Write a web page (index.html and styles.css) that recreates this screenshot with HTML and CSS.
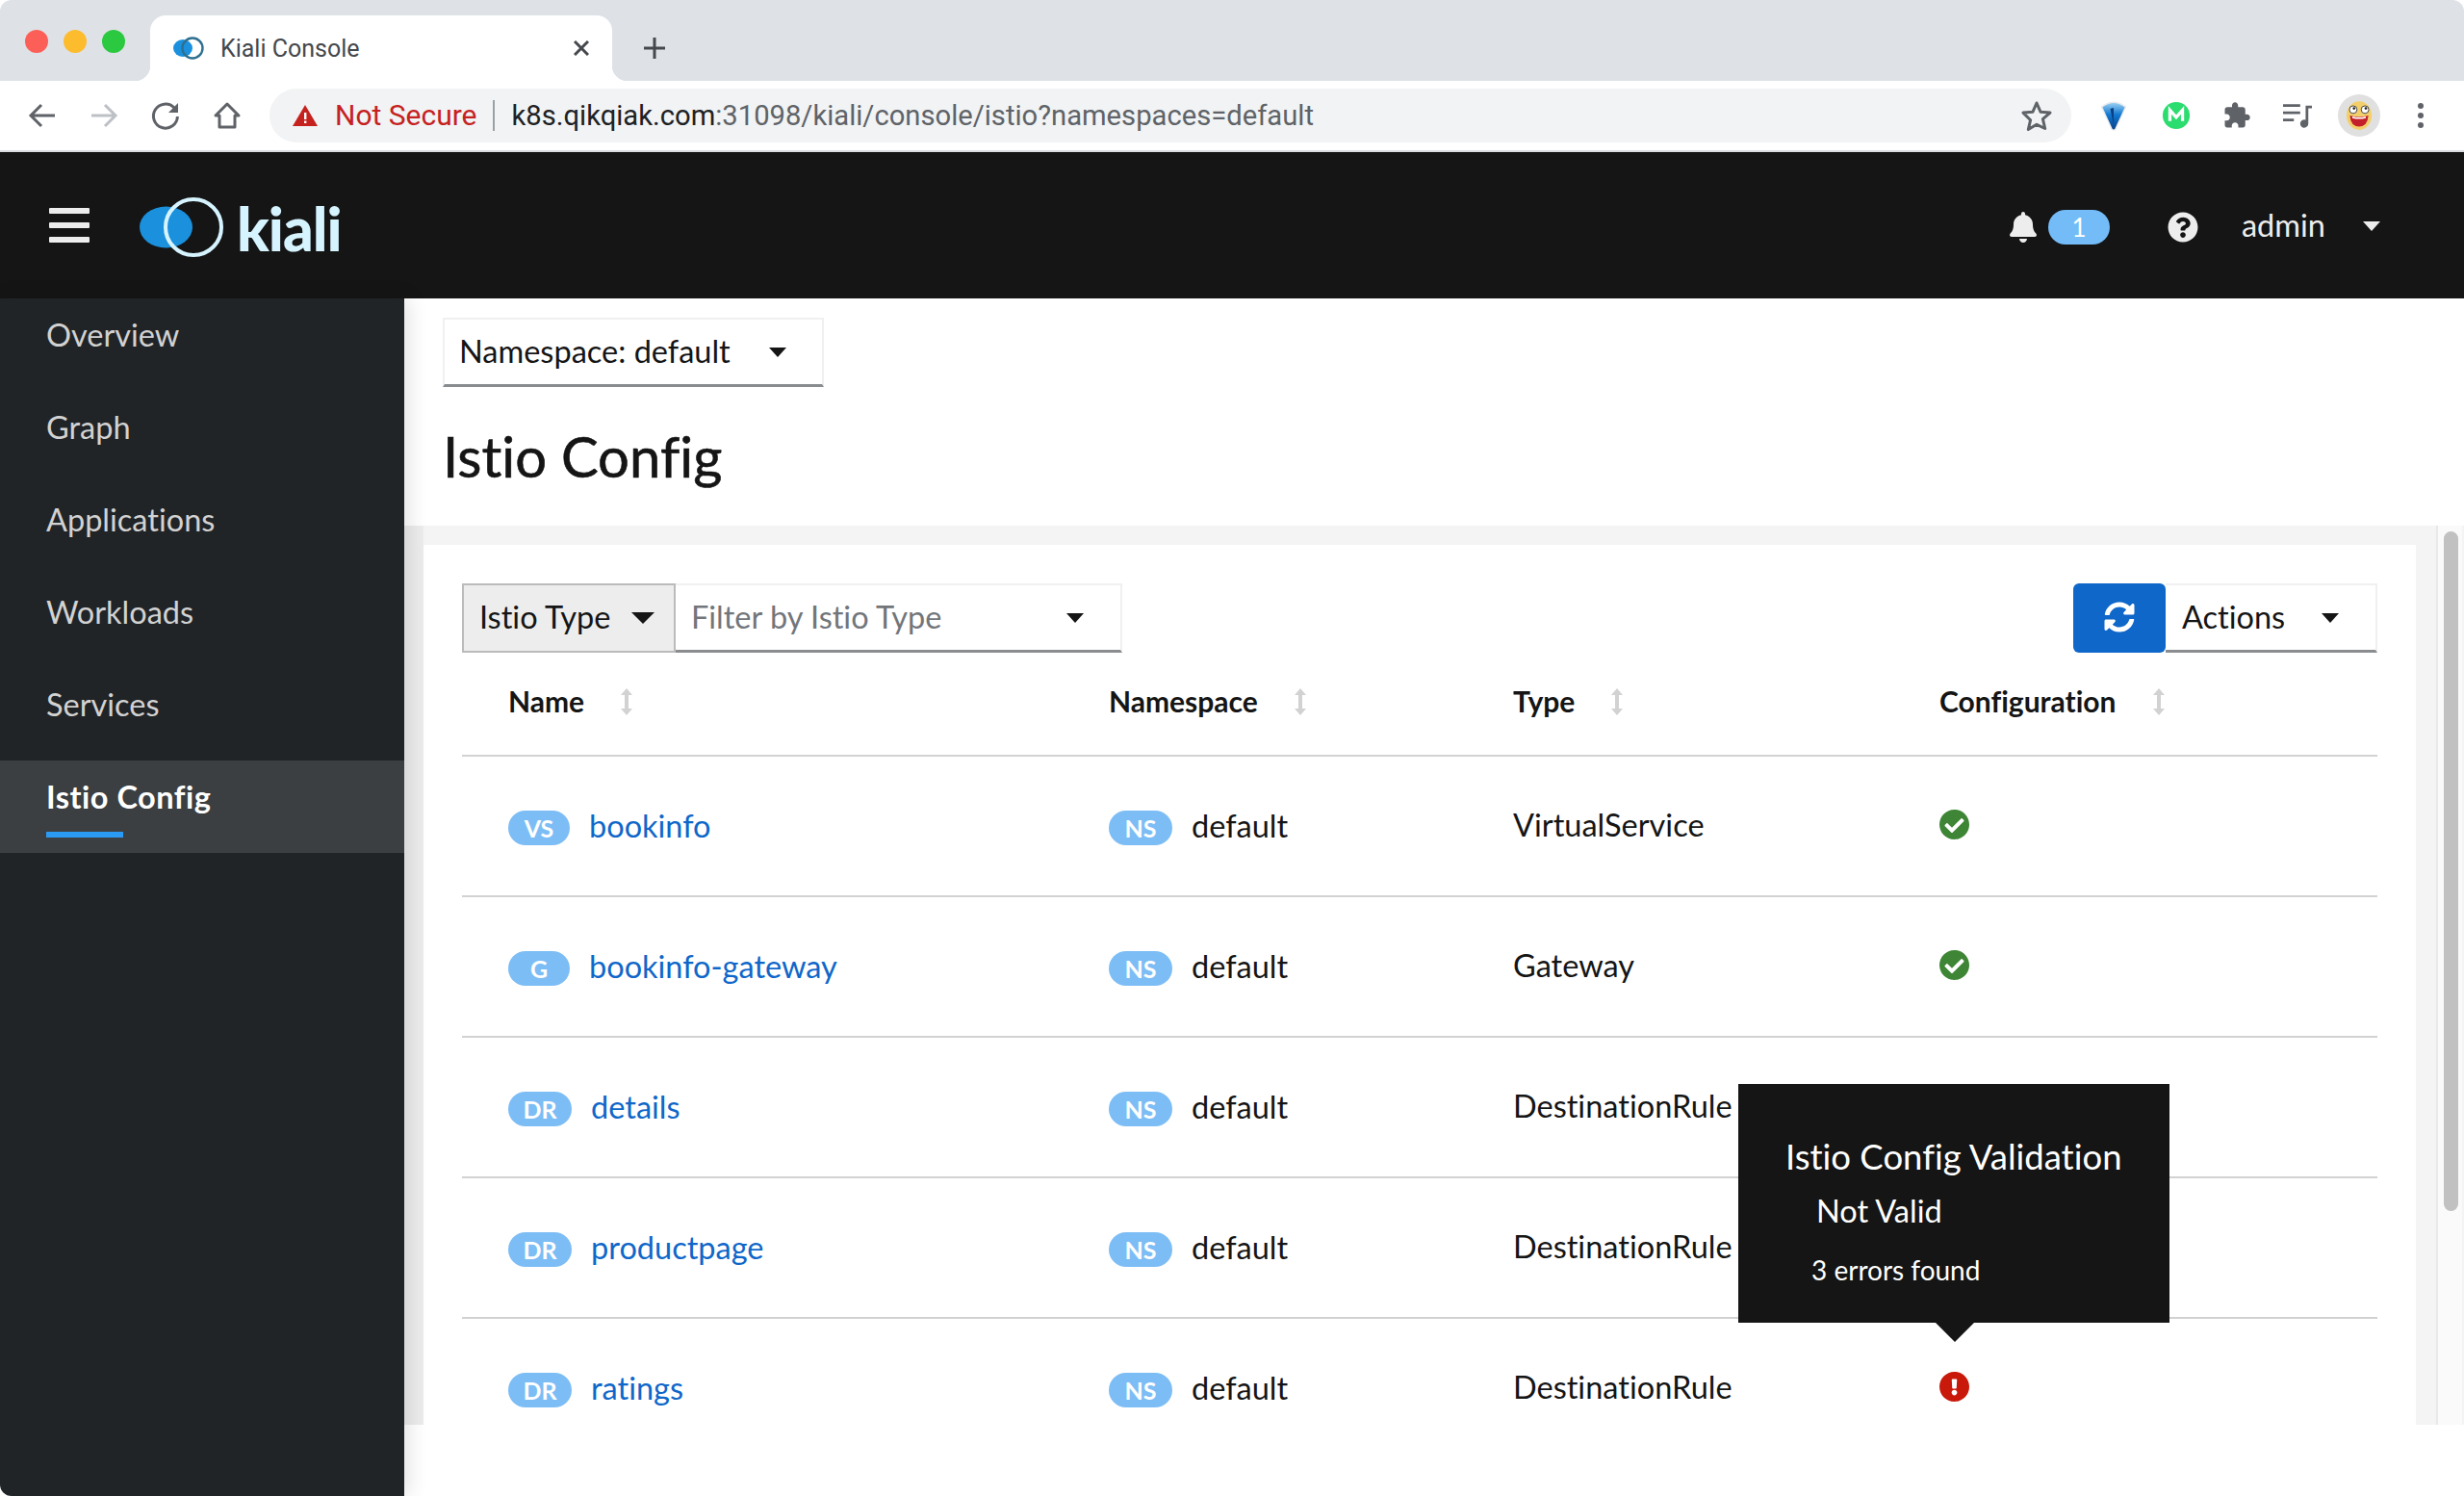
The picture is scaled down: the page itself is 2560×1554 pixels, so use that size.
FILE: index.html
```html
<!DOCTYPE html>
<html lang="en">
<head>
    <meta charset="UTF-8">
    <title>Kiali Console</title>
    <link rel="stylesheet" href="styles.css">
</head>
<body>
<div class="window">
    <div class="tabstrip">
        <div class="lights">
            <span class="light red"></span>
            <span class="light yellow"></span>
            <span class="light green"></span>
        </div>
        <div class="tab">
            <svg class="favicon" viewBox="0 0 32 24">
                <ellipse cx="10" cy="12" rx="10" ry="9" fill="#1b90dd"/>
                <circle cx="20" cy="12" r="10.5" fill="#fff" fill-opacity="0" stroke="#2f6f8f" stroke-width="2.4"/>
            </svg>
            <span class="tab-title">Kiali Console</span>
            <svg class="tab-close" viewBox="0 0 16 16"><path d="M1 1l14 14M15 1L1 15" stroke="#45484c" stroke-width="3" fill="none"/></svg>
        </div>
        <svg class="new-tab" viewBox="0 0 24 24"><path d="M12 1v22M1 12h22" stroke="#45484c" stroke-width="3" fill="none"/></svg>
    </div>

    <div class="toolbar">
        <svg class="nav-icon" viewBox="0 0 32 32"><path d="M29 16H5M15 5L4 16l11 11" stroke="#5f6368" stroke-width="3" fill="none"/></svg>
        <svg class="nav-icon" viewBox="0 0 32 32"><path d="M3 16h24M17 5l11 11-11 11" stroke="#bdc1c6" stroke-width="3" fill="none"/></svg>
        <svg class="nav-icon" viewBox="0 0 32 32"><path d="M25 8a12.5 12.5 0 1 0 3.4 9" stroke="#5f6368" stroke-width="3" fill="none"/><path d="M29 3v10H19z" fill="#5f6368"/></svg>
        <svg class="nav-icon" viewBox="0 0 32 32"><path d="M16 4L4 16h4v12h16V16h4z" stroke="#5f6368" stroke-width="3" fill="none" stroke-linejoin="round"/></svg>
        <div class="omnibox">
            <svg class="warn" viewBox="0 0 26 22"><path d="M13 0l13 22H0z" fill="#c5221f"/><path d="M12 8h2.4v7H12zM12 16.500h2.400v2.500H12z" fill="#fff"/></svg>
            <span class="not-secure">Not Secure</span>
            <span class="url"><span class="host">k8s.qikqiak.com</span>:31098/kiali/console/istio?namespaces=default</span>
            <svg class="star" viewBox="0 0 32 32"><path d="M16 3l4 9.200 10 .9-7.600 6.600 2.300 9.800L16 25.300l-8.700 5.200 2.300-9.800L2 13.100l10-.9z" stroke="#5f6368" stroke-width="3" fill="none" stroke-linejoin="round"/></svg>
        </div>
        <div class="extensions">
            <svg class="ext ext-first" viewBox="0 0 32 36">
                <defs><linearGradient id="gem" x1="0" y1="0" x2="0" y2="1"><stop offset="0" stop-color="#9fd4f5"/><stop offset=".45" stop-color="#1278d0"/><stop offset="1" stop-color="#0a3f86"/></linearGradient></defs>
                <path d="M2 8q14-11 28 0L18 34q-2 2-4 0z" fill="url(#gem)" stroke="#e8eaed" stroke-width="1.500"/>
                <path d="M16 9l-4 1 3 14 1 4z" fill="#0a3f86"/>
            </svg>
            <svg class="ext" viewBox="0 0 32 32">
                <circle cx="16" cy="16" r="15" fill="#2bdc6f"/>
                <path d="M9 22V10l7 8 7-8v12" stroke="#fff" stroke-width="3.500" fill="none"/>
            </svg>
            <svg class="ext" viewBox="0 0 24 24"><path fill="#5f6368" d="M20.500 11H19V7c0-1.100-.9-2-2-2h-4V3.500C13 2.120 11.880 1 10.500 1S8 2.120 8 3.500V5H4c-1.100 0-1.990.9-1.990 2v3.800H3.500c1.490 0 2.700 1.210 2.700 2.700s-1.210 2.700-2.700 2.700H2V20c0 1.100.9 2 2 2h3.800v-1.500c0-1.490 1.210-2.700 2.700-2.700 1.490 0 2.700 1.210 2.700 2.700V22H17c1.100 0 2-.9 2-2v-4h1.500c1.380 0 2.500-1.120 2.500-2.500S21.880 11 20.500 11z"/></svg>
            <svg class="ext" viewBox="0 0 32 32">
                <path d="M0 5h19M0 13h19M0 21h12" stroke="#5f6368" stroke-width="3" fill="none"/>
                <path d="M25 5h7v3h-4v17a4.500 4.500 0 1 1-3-4.200z" fill="#5f6368"/>
            </svg>
            <div class="avatar">
                <svg viewBox="0 0 32 36">
                    <ellipse cx="16" cy="18" rx="15" ry="17" fill="#f3cf6c"/>
                    <circle cx="9" cy="11" r="4.500" fill="#fff" stroke="#333" stroke-width="1"/>
                    <circle cx="23" cy="11" r="4.500" fill="#fff" stroke="#333" stroke-width="1"/>
                    <circle cx="10" cy="9.500" r="1.500" fill="#222"/>
                    <circle cx="24" cy="9.500" r="1.500" fill="#222"/>
                    <path d="M5 18q11 3 22 0q-1 13-11 13T5 18z" fill="#c3202b"/>
                    <path d="M8 19q8 2 16 0v2q-8 2-16 0z" fill="#fff"/>
                </svg>
            </div>
            <div class="kebab"><span></span><span></span><span></span></div>
        </div>
    </div>

    <header class="masthead">
        <div class="hamburger"><span></span><span></span><span></span></div>
        <svg class="logo-mark" viewBox="0 0 88 62">
            <ellipse cx="27.500" cy="31" rx="27.500" ry="21.500" fill="#1b90dd"/>
            <circle cx="56" cy="31" r="29" fill="none" stroke="#d6f4ff" stroke-width="4"/>
        </svg>
        <span class="logo-text">kiali</span>
        <div class="masthead-right">
            <svg class="bell" viewBox="0 0 448 512"><path fill="#ededed" d="M224 512c35.320 0 63.970-28.650 63.970-64H160.030c0 35.350 28.650 64 63.970 64zm215.390-149.710c-19.320-20.760-55.470-51.990-55.470-154.290 0-77.700-54.480-139.900-127.940-155.160V32c0-17.670-14.320-32-31.980-32s-31.980 14.330-31.980 32v20.840C118.560 68.100 64.080 130.300 64.080 208c0 102.300-36.150 133.530-55.470 154.290-6 6.450-8.660 14.160-8.610 21.710.11 16.400 12.980 32 32.100 32h383.800c19.120 0 32-15.600 32.100-32 .05-7.550-2.610-15.270-8.610-21.710z"/></svg>
            <span class="count">1</span>
            <svg class="help" viewBox="0 0 512 512"><path fill="#ededed" d="M504 256c0 136.997-111.043 248-248 248S8 392.997 8 256C8 119.083 119.043 8 256 8s248 111.083 248 248zM262.655 90c-54.497 0-89.255 22.957-116.549 63.758-3.536 5.286-2.353 12.415 2.715 16.258l34.699 26.310c5.205 3.947 12.621 3.008 16.665-2.122 17.864-22.658 30.113-35.797 57.303-35.797 20.429 0 45.698 13.148 45.698 32.958 0 14.976-12.363 22.667-32.534 33.976C247.128 238.528 216 254.941 216 296v4c0 6.627 5.373 12 12 12h56c6.627 0 12-5.373 12-12v-1.333c0-28.462 83.186-29.647 83.186-106.667 0-58.002-60.165-102-116.531-102zM256 338c-25.365 0-46 20.635-46 46 0 25.364 20.635 46 46 46s46-20.636 46-46c0-25.365-20.635-46-46-46z"/></svg>
            <span class="user">admin</span>
            <span class="caret caret-light"></span>
        </div>
    </header>

    <div class="app">
        <nav class="sidebar">
            <a class="nav-item">Overview</a>
            <a class="nav-item">Graph</a>
            <a class="nav-item">Applications</a>
            <a class="nav-item">Workloads</a>
            <a class="nav-item">Services</a>
            <a class="nav-item active">Istio Config</a>
        </nav>

        <main class="main">
            <div class="namespace-bar">
                <div class="select namespace-select">
                    <span>Namespace: default</span>
                    <span class="caret"></span>
                </div>
            </div>
            <h1 class="page-title">Istio Config</h1>

            <div class="scroll-area">
                <div class="card">
                    <div class="filters">
                        <div class="type-select">
                            <span>Istio Type</span>
                            <span class="caret caret-big"></span>
                        </div>
                        <div class="select filter-input">
                            <span class="placeholder">Filter by Istio Type</span>
                            <span class="caret"></span>
                        </div>
                        <div class="filters-right">
                            <button class="refresh">
                                <svg viewBox="0 0 512 512"><path fill="#fff" d="M370.720 133.280C339.458 104.008 298.888 87.962 255.848 88c-77.458.068-144.328 53.178-162.791 126.850-1.344 5.363-6.122 9.150-11.651 9.150H24.103c-7.498 0-13.194-6.807-11.807-14.176C33.933 94.924 134.813 8 256 8c66.448 0 126.791 26.136 171.315 68.685L463.030 40.970C478.149 25.851 504 36.559 504 57.941V192c0 13.255-10.745 24-24 24H345.941c-21.382 0-32.090-25.851-16.971-40.971l41.750-41.749zM32 296h134.059c21.382 0 32.090 25.851 16.971 40.971l-41.750 41.750c31.262 29.273 71.835 45.319 114.876 45.280 77.418-.07 144.315-53.144 162.787-126.849 1.344-5.363 6.122-9.150 11.651-9.150h57.304c7.498 0 13.194 6.807 11.807 14.176C478.067 417.076 377.187 504 256 504c-66.448 0-126.791-26.136-171.315-68.685L48.970 471.030C33.851 486.149 8 475.441 8 454.059V320c0-13.255 10.745-24 24-24z"/></svg>
                            </button>
                            <div class="select actions">
                                <span>Actions</span>
                                <span class="caret"></span>
                            </div>
                        </div>
                    </div>

                    <div class="row head">
                        <div class="cell">Name <svg class="sort" viewBox="0 0 12 28"><path d="M6 0l6 7H8v14h4l-6 7-6-7h4V7H0z" fill="#d2d2d2"/></svg></div>
                        <div class="cell">Namespace <svg class="sort" viewBox="0 0 12 28"><path d="M6 0l6 7H8v14h4l-6 7-6-7h4V7H0z" fill="#d2d2d2"/></svg></div>
                        <div class="cell">Type <svg class="sort" viewBox="0 0 12 28"><path d="M6 0l6 7H8v14h4l-6 7-6-7h4V7H0z" fill="#d2d2d2"/></svg></div>
                        <div class="cell">Configuration <svg class="sort" viewBox="0 0 12 28"><path d="M6 0l6 7H8v14h4l-6 7-6-7h4V7H0z" fill="#d2d2d2"/></svg></div>
                    </div>

                    <div class="row">
                        <div class="cell"><span class="badge">VS</span><a class="link">bookinfo</a></div>
                        <div class="cell"><span class="badge ns">NS</span><span>default</span></div>
                        <div class="cell">VirtualService</div>
                        <div class="cell"><svg class="status" viewBox="8 8 496 496"><path fill="#3e8635" d="M504 256c0 136.967-111.033 248-248 248S8 392.967 8 256 119.033 8 256 8s248 111.033 248 248zM227.314 387.314l184-184c6.248-6.248 6.248-16.379 0-22.627l-22.627-22.627c-6.248-6.249-16.379-6.249-22.628 0L216 308.118l-70.059-70.059c-6.248-6.248-16.379-6.248-22.628 0l-22.627 22.627c-6.248 6.248-6.248 16.379 0 22.627l104 104c6.249 6.249 16.379 6.249 22.628.001z"/></svg></div>
                    </div>
                    <div class="row">
                        <div class="cell"><span class="badge">G</span><a class="link">bookinfo-gateway</a></div>
                        <div class="cell"><span class="badge ns">NS</span><span>default</span></div>
                        <div class="cell">Gateway</div>
                        <div class="cell"><svg class="status" viewBox="8 8 496 496"><path fill="#3e8635" d="M504 256c0 136.967-111.033 248-248 248S8 392.967 8 256 119.033 8 256 8s248 111.033 248 248zM227.314 387.314l184-184c6.248-6.248 6.248-16.379 0-22.627l-22.627-22.627c-6.248-6.249-16.379-6.249-22.628 0L216 308.118l-70.059-70.059c-6.248-6.248-16.379-6.248-22.628 0l-22.627 22.627c-6.248 6.248-6.248 16.379 0 22.627l104 104c6.249 6.249 16.379 6.249 22.628.001z"/></svg></div>
                    </div>
                    <div class="row">
                        <div class="cell"><span class="badge dr">DR</span><a class="link">details</a></div>
                        <div class="cell"><span class="badge ns">NS</span><span>default</span></div>
                        <div class="cell">DestinationRule</div>
                        <div class="cell"></div>
                    </div>
                    <div class="row">
                        <div class="cell"><span class="badge dr">DR</span><a class="link">productpage</a></div>
                        <div class="cell"><span class="badge ns">NS</span><span>default</span></div>
                        <div class="cell">DestinationRule</div>
                        <div class="cell"></div>
                    </div>
                    <div class="row">
                        <div class="cell"><span class="badge dr">DR</span><a class="link">ratings</a></div>
                        <div class="cell"><span class="badge ns">NS</span><span>default</span></div>
                        <div class="cell">DestinationRule</div>
                        <div class="cell status-cell">
                            <svg class="status" viewBox="8 8 496 496"><path fill="#c9190b" d="M504 256c0 136.997-111.043 248-248 248S8 392.997 8 256C8 119.083 119.043 8 256 8s248 111.083 248 248zm-248 50c-25.405 0-46 20.595-46 46s20.595 46 46 46 46-20.595 46-46-20.595-46-46-46zm-43.673-165.346l7.418 136c.347 6.364 5.609 11.346 11.982 11.346h48.546c6.373 0 11.635-4.982 11.982-11.346l7.418-136c.375-6.874-5.098-12.654-11.982-12.654h-63.383c-6.884 0-12.356 5.780-11.981 12.654z"/></svg>
                            <div class="tooltip">
                                <div class="tooltip-title">Istio Config Validation</div>
                                <div class="tooltip-state">Not Valid</div>
                                <div class="tooltip-note">3 errors found</div>
                            </div>
                        </div>
                    </div>
                </div>
                <div class="scrollbar"><div class="thumb"></div></div>
            </div>
        </main>
    </div>
</div>
</body>
</html>
```

FILE: styles.css
```css
* {
    margin: 0;
    padding: 0;
    box-sizing: border-box;
}

body {
    background-color: #ffffff;
    font-family: 'Lato', 'Noto Sans', sans-serif;
    font-size: 32.5px;
    font-variant-ligatures: none;
    color: #151515;
}

.window {
    width: 2560px;
    height: 1554px;
    display: flex;
    flex-direction: column;
    overflow: hidden;
    border-radius: 12px;
}

/* browser chrome */
.tabstrip {
    height: 84px;
    flex: none;
    background-color: #dee1e6;
    display: flex;
    align-items: flex-end;
    padding-left: 26px;
}

.lights {
    display: flex;
    gap: 16px;
    align-self: flex-start;
    margin-top: 31px;
    width: 130px;
}

.light {
    width: 24px;
    height: 24px;
    border-radius: 50%;
}

.red { background-color: #fc5f57; }
.yellow { background-color: #fdbc2e; }
.green { background-color: #2ac940; }

.tab {
    position: relative;
    width: 480px;
    height: 68px;
    background-color: #ffffff;
    border-radius: 16px 16px 0 0;
    display: flex;
    align-items: center;
    padding-left: 24px;
}

.tab::before,
.tab::after {
    content: "";
    position: absolute;
    bottom: 0;
    width: 16px;
    height: 16px;
}

.tab::before {
    left: -16px;
    background: radial-gradient(circle at 0 0, #dee1e6 16px, #ffffff 16.5px);
}

.tab::after {
    right: -16px;
    background: radial-gradient(circle at 100% 0, #dee1e6 16px, #ffffff 16.5px);
}

.favicon {
    width: 32px;
    height: 24px;
    margin-right: 17px;
}

.tab-title {
    font-family: 'Roboto', sans-serif;
    font-size: 25px;
    color: #45484c;
    flex: 1;
}

.tab-close {
    width: 16px;
    height: 16px;
    margin-right: 24px;
}

.new-tab {
    width: 24px;
    height: 24px;
    margin: 0 0 22px 32px;
}

.toolbar {
    height: 74px;
    flex: none;
    background-color: #ffffff;
    border-bottom: 2px solid #dadce0;
    display: flex;
    align-items: center;
    padding-left: 28px;
}

.nav-icon {
    width: 32px;
    height: 32px;
    margin-right: 32px;
}

.omnibox {
    width: 1872px;
    height: 56px;
    margin-left: -4px;
    background-color: #f1f3f4;
    border-radius: 28px;
    display: flex;
    align-items: center;
    padding-left: 24px;
    font-family: 'Roboto', sans-serif;
    font-size: 29.2px;
}

.warn {
    width: 26px;
    height: 22px;
    margin-right: 18px;
}

.not-secure {
    color: #c5221f;
    font-size: 30px;
    padding-right: 16px;
    border-right: 2px solid #9aa0a6;
    margin-right: 18px;
    line-height: 32px;
}

.url {
    color: #5f6368;
    flex: 1;
}

.host {
    color: #202124;
}

.star {
    width: 32px;
    height: 32px;
    margin-right: 20px;
}

.extensions {
    display: flex;
    align-items: center;
}

.ext {
    width: 30px;
    height: 32px;
    margin-left: 33px;
}

.ext-first {
    margin: 0 2px 0 29px;
}

.avatar {
    width: 44px;
    height: 44px;
    margin-left: 27px;
    background-color: #e0e0e0;
    border-radius: 50%;
    display: flex;
    align-items: center;
    justify-content: center;
}

.avatar svg {
    width: 28px;
    height: 32px;
}

.kebab {
    display: flex;
    flex-direction: column;
    gap: 4px;
    margin-left: 39px;
}

.kebab span {
    width: 6px;
    height: 6px;
    border-radius: 50%;
    background-color: #5f6368;
}

/* kiali masthead */
.masthead {
    height: 152px;
    flex: none;
    background-color: #151515;
    display: flex;
    align-items: center;
    padding-left: 51px;
}

.hamburger {
    display: flex;
    flex-direction: column;
    gap: 9px;
    margin: 0 52px 0 0;
}

.hamburger span {
    width: 42px;
    height: 6px;
    background-color: #ededed;
    border-radius: 1px;
}

.logo-mark {
    width: 88px;
    height: 62px;
    margin-top: 3px;
}

.logo-text {
    font-weight: 900;
    font-size: 62px;
    letter-spacing: -1px;
    color: #d6f4ff;
    margin: 6px 0 0 13px;
}

.masthead-right {
    margin-left: auto;
    display: flex;
    align-items: center;
    margin-top: 4px;
    padding-right: 86px;
}

.bell {
    width: 28px;
    height: 32px;
    margin-right: 12px;
}

.count {
    width: 64px;
    height: 36px;
    border-radius: 18px;
    background-color: #73bcf7;
    color: #ffffff;
    font-size: 26px;
    text-align: center;
    line-height: 36px;
}

.help {
    width: 32px;
    height: 32px;
    margin: 0 45px 0 60px;
}

.user {
    color: #ededed;
    margin: -6px 39px 0 0;
}

.caret {
    display: inline-block;
    width: 0;
    height: 0;
    margin-top: 3px;
    border-top: 10px solid #151515;
    border-left: 9px solid transparent;
    border-right: 9px solid transparent;
}

.caret-light {
    border-top-color: #ededed;
    margin: -2px 1px 0 0;
}

.caret-big {
    border-top-width: 12px;
    border-left-width: 12px;
    border-right-width: 12px;
}

/* page */
.app {
    flex: 1;
    display: flex;
    min-height: 0;
}

.sidebar {
    width: 420px;
    flex: none;
    background-color: #212427;
    box-shadow: 4px 0 20px rgba(0, 0, 0, 0.12);
    position: relative;
    z-index: 1;
}

.nav-item {
    display: block;
    height: 96px;
    padding: 14px 48px 0;
    line-height: 48px;
    color: #d2d2d2;
}

.nav-item.active {
    background-color: #3c3f42;
    color: #ffffff;
    font-weight: 700;
    letter-spacing: 0.5px;
}

.nav-item.active::after {
    content: "";
    display: block;
    width: 80px;
    height: 6px;
    margin-top: 12px;
    background-color: #2b9af3;
}

.main {
    flex: 1;
    min-width: 0;
    display: flex;
    flex-direction: column;
}

.namespace-bar {
    padding: 20px 40px 0;
}

.select {
    height: 72px;
    display: flex;
    align-items: center;
    justify-content: space-between;
    background-color: #ffffff;
    border: 2px solid #f0f0f0;
    border-bottom: 3px solid #8a8d90;
    padding-bottom: 3px;
}

.namespace-select {
    width: 396px;
    padding-left: 15px;
    padding-right: 37px;
}

.page-title {
    height: 144px;
    padding-left: 40px;
    font-size: 58px;
    font-weight: 400;
    line-height: 144px;
    -webkit-text-stroke: 0.6px #151515;
}

.scroll-area {
    height: 934px;
    display: flex;
    background-color: #f4f4f4;
    box-shadow: inset 20px 0 0 #ececec;
}

.card {
    position: relative;
    width: 2070px;
    height: 914px;
    margin: 20px 21px 0 20px;
    padding: 40px 40px 0;
    background-color: #ffffff;
    overflow: hidden;
}

.filters {
    display: flex;
    height: 72px;
}

.type-select {
    width: 222px;
    display: flex;
    align-items: center;
    justify-content: space-between;
    padding: 0 20px 3px 16px;
    background-color: #ededed;
    border: 2px solid #bbbbbb;
}

.filter-input {
    width: 464px;
    padding-left: 16px;
    padding-right: 38px;
    border-left: none;
}

.placeholder {
    color: #72767b;
}

.filters-right {
    margin-left: auto;
    display: flex;
}

.refresh {
    width: 96px;
    height: 72px;
    padding-bottom: 2px;
    background-color: #0f67c9;
    border: none;
    border-radius: 6px;
    display: flex;
    align-items: center;
    justify-content: center;
}

.refresh svg {
    width: 32px;
    height: 32px;
}

.actions {
    width: 220px;
    padding-left: 17px;
    padding-right: 38px;
    border-left: none;
}

.row {
    display: grid;
    grid-template-columns: 624px 420px 443px 455px;
    height: 146px;
    padding: 0 0 4px 48px;
    border-bottom: 2px solid #d2d2d2;
    align-items: center;
}

.row.head {
    height: 108px;
    padding-bottom: 7px;
    font-size: 30px;
    font-weight: 700;
}

.cell {
    display: flex;
    align-items: center;
}

.sort {
    width: 12px;
    height: 28px;
    margin: 2px 0 0 38px;
}

.badge {
    width: 64px;
    height: 36px;
    margin: 8px 20px 0 0;
    border-radius: 18px;
    background-color: #7dbdf5;
    color: #ffffff;
    font-size: 25px;
    font-weight: 700;
    line-height: 36px;
    text-align: center;
}

.badge.dr {
    width: 66px;
    margin-right: 20px;
}

.badge.ns {
    width: 66px;
}

.link {
    color: #0f67c9;
}

.row .cell > span:not(.badge),
.row .link {
    margin-top: 2px;
}

.status {
    width: 31px;
    height: 31px;
    margin-top: 0;
}

.status-cell {
    position: relative;
}

.tooltip {
    position: absolute;
    left: -209px;
    bottom: 82px;
    width: 448px;
    height: 248px;
    padding: 45px 49px 0;
    background-color: #151515;
    color: #ffffff;
}

.tooltip::after {
    content: "";
    position: absolute;
    left: 205px;
    bottom: -20px;
    border-top: 20px solid #151515;
    border-left: 20px solid transparent;
    border-right: 20px solid transparent;
}

.tooltip-title {
    font-size: 36.5px;
    line-height: 60px;
}

.tooltip-state {
    line-height: 54px;
    padding-left: 32px;
}

.tooltip-note {
    font-size: 28px;
    line-height: 68px;
    padding-left: 27px;
}

.scrollbar {
    width: 27px;
    flex: none;
    background-color: #fafafa;
    border-left: 2px solid #e8e8e8;
    padding: 6px 0 0 6px;
}

.thumb {
    width: 15px;
    height: 706px;
    border-radius: 8px;
    background-color: #c1c1c1;
}
```
